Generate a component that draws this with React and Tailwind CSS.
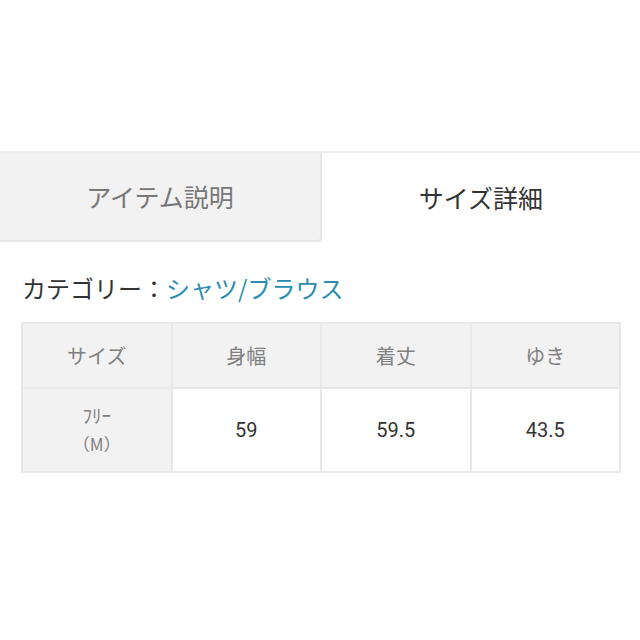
export default function App() {
  const headers = ['サイズ', '身幅', '着丈', 'ゆき']
  const values = ['59', '59.5', '43.5']

  return (
    <div className="w-[640px] h-[640px] bg-white font-['Noto_Sans_CJK_JP',sans-serif] overflow-hidden">
      <div className="h-[151px]"></div>

      <div className="flex border-t-2 border-[#ececec]">
        <div className="w-[322px] h-[89px] flex items-center justify-center bg-[#f2f2f2] border-r-2 border-b-2 border-[#e6e6e6] rounded-br-sm">
          <span className="text-[25px] text-[#777]">アイテム説明</span>
        </div>
        <div className="flex-1 h-[89px] flex items-center justify-center">
          <span className="text-[25px] text-[#333]">サイズ詳細</span>
        </div>
      </div>

      <div className="px-[22px] pt-[28px] text-[24px] leading-[36px]">
        <span className="text-[#333]">カテゴリー：</span>
        <span className="text-[#2a8cb0]">シャツ/ブラウス</span>
      </div>

      <div className="px-[21px] pt-[16px]">
        <table className="w-[600px] border-collapse table-fixed">
          <tbody>
            <tr className="h-[65px] bg-[#f2f2f2]">
              {headers.map((h) => (
                <td key={h} className="border-2 border-[#e8e8e8] text-center text-[20px] text-[#808080]">
                  {h}
                </td>
              ))}
            </tr>
            <tr className="h-[84px]">
              <td className="border-2 border-[#e8e8e8] bg-[#f2f2f2] text-center text-[#808080]">
                <div className="text-[19px] leading-[28px]">ﾌﾘｰ</div>
                <div className="text-[17px] leading-[30px]">（M）</div>
              </td>
              {values.map((v) => (
                <td key={v} className="border-2 border-[#e8e8e8] text-center text-[20px] text-[#333] font-['Roboto',sans-serif]">
                  {v}
                </td>
              ))}
            </tr>
          </tbody>
        </table>
      </div>
    </div>
  )
}
